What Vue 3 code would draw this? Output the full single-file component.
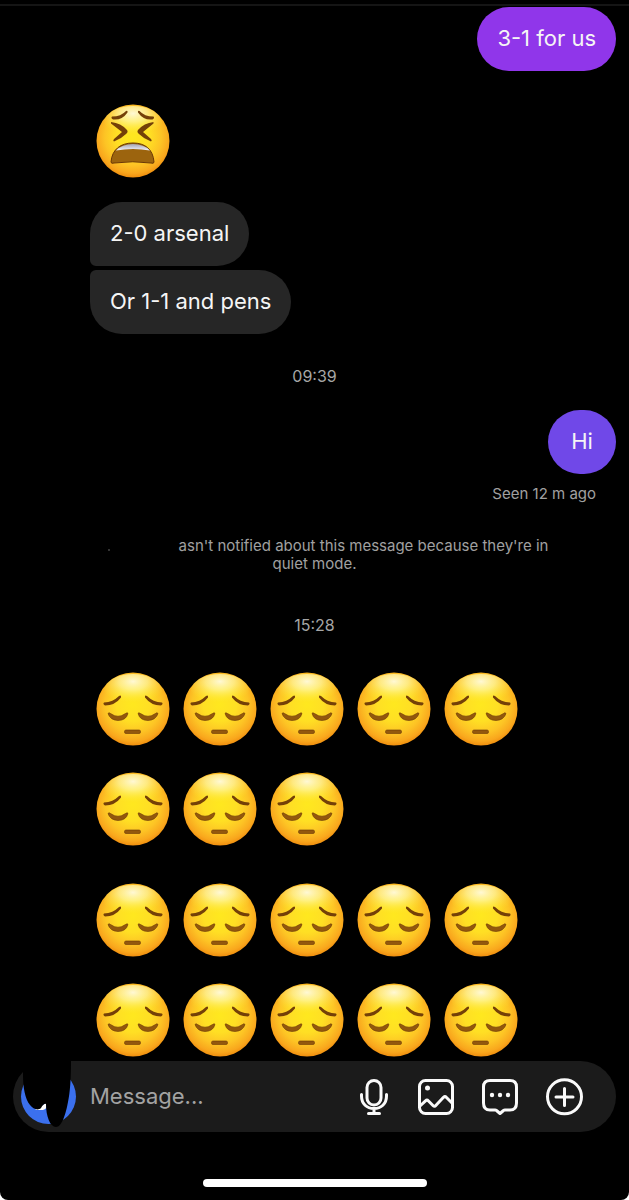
<script setup>
import { ref } from 'vue'

const draft = ref('')
const pensiveMessages = [
  [5, 3],
  [5, 5],
]
</script>

<template>
  <div class="screen">
    <svg class="defs" aria-hidden="true">
      <defs>
        <radialGradient id="face" cx="50%" cy="44%" r="57%">
          <stop offset="0" stop-color="#ffe81f" />
          <stop offset="0.4" stop-color="#ffdf24" />
          <stop offset="0.68" stop-color="#fdc425" />
          <stop offset="0.88" stop-color="#f9a71d" />
          <stop offset="1" stop-color="#ee8a0c" />
        </radialGradient>
        <radialGradient id="shine" cx="50%" cy="22%" r="62%">
          <stop offset="0" stop-color="#fffde8" stop-opacity="0.9" />
          <stop offset="0.4" stop-color="#fffab0" stop-opacity="0.65" />
          <stop offset="1" stop-color="#ffec30" stop-opacity="0" />
        </radialGradient>
        <linearGradient id="teeth" x1="0" y1="0" x2="0" y2="1">
          <stop offset="0" stop-color="#a3a3b3" />
          <stop offset="1" stop-color="#f4f4fa" />
        </linearGradient>
        <symbol id="pensive" viewBox="0 0 74 74">
          <circle cx="37" cy="37" r="36.5" fill="url(#face)" />
          <ellipse cx="37" cy="19" rx="29" ry="17" fill="url(#shine)" />
          <g fill="#744008">
            <path d="M8 30.500Q17 30 23 24Q25.500 22.500 25 25.500Q19 33.500 9 33.500Q6.500 32 8 30.500Z" />
            <path d="M66 30.500Q57 30 51 24Q48.500 22.500 49 25.500Q55 33.500 65 33.500Q67.500 32 66 30.500Z" />
          </g>
          <g fill="#93580d" stroke="#693706" stroke-width="0.600">
            <path d="M12 41.500Q13 40 14.500 41.500Q22 47 29.500 41.500Q31.500 40 32 41.500Q30 48.500 22 48.500Q14 48 12 41.500Z" />
            <path d="M62 41.500Q61 40 59.500 41.500Q52 47 44.500 41.500Q42.500 40 42 41.500Q44 48.500 52 48.500Q60 48 62 41.500Z" />
            <rect x="28.500" y="58" width="16" height="3.500" rx="1.500" />
          </g>
        </symbol>
        <symbol id="tired" viewBox="0 0 74 74">
          <circle cx="37" cy="37" r="36.5" fill="url(#face)" />
          <ellipse cx="37" cy="19" rx="29" ry="17" fill="url(#shine)" />
          <g fill="#744008">
            <path d="M16 12.500Q25 12.500 30 7Q32 6 31.500 8.500Q26 16.500 17 15.500Q14.500 14 16 12.500Z" />
            <path d="M57.500 12.500Q48.500 12.500 43.500 7Q41.500 6 42 8.500Q47.500 16.500 56.500 15.500Q59 14 57.500 12.500Z" />
            <path d="M15 18Q25 19 31 26Q32.500 28 30 30Q25 35 18 37.500Q16.500 36.500 18 35L26 28L15 19.500Z" />
            <path d="M57.500 18Q48 19 42 26Q40.500 28 43 30Q48 35 55 37.500Q56.500 36.500 55 35L47 28L57.500 19.500Z" />
          </g>
          <path d="M15 58C16 45 25 39 37 39C49 39 57 45 58 58Q58 60 55 59Q37 56.500 18 59Q15 60 15 58Z" fill="#9c640e" stroke="#693706" stroke-width="1" />
          <path d="M20 46.500Q26 40 37 40Q48 40 54 46.500Q37 43.500 20 46.500Z" fill="url(#teeth)" />
        </symbol>
      </defs>
    </svg>

    <main class="thread">
      <p class="bubble sent violet">3-1 for us</p>
      <div class="emoji-message">
        <div class="emoji-row">
          <svg class="emoji" role="img" aria-label="Tired face"><use href="#tired" /></svg>
        </div>
      </div>
      <p class="bubble received first">2-0 arsenal</p>
      <p class="bubble received last">Or 1-1 and pens</p>
      <time class="stamp">09:39</time>
      <p class="bubble sent indigo">Hi</p>
      <p class="seen">Seen 12 m ago</p>
      <p class="notice"><span class="hidden-name" aria-hidden="true"></span>asn't notified about this message because they're in quiet mode.</p>
      <time class="stamp">15:28</time>
      <div v-for="(rows, m) in pensiveMessages" :key="m" class="emoji-message pensive-message">
        <div v-for="(count, r) in rows" :key="r" class="emoji-row">
          <svg v-for="n in count" :key="n" class="emoji" role="img" aria-label="Pensive face"><use href="#pensive" /></svg>
        </div>
      </div>
    </main>

    <form class="composer" @submit.prevent>
      <button type="button" aria-label="Camera">
        <svg width="70" height="71" viewBox="0 0 70 71">
          <circle cx="35.500" cy="35.500" r="27.500" fill="#3b70ee" />
          <path d="M22 49L33 42V47Q32 49 28 49Z" fill="#fff" />
          <path d="M10 0V14C10 26 12 38 17 44C20 48 25 50 28 47Q31 42 33 43C33 55 37 66 43 66C49 66 53 52 55 41C57 31 58 18 58 0Z" fill="#000" />
        </svg>
      </button>
      <input v-model="draft" class="field" type="text" placeholder="Message..." aria-label="Message" />
      <div class="actions">
        <button type="button" aria-label="Voice message">
          <svg width="36" height="40" viewBox="0 0 36 40">
            <rect x="11" y="3.500" width="14" height="24.500" rx="7" />
            <path d="M5.500 17.500V19C5.500 27 11 31.500 18 31.500S30.500 27 30.500 19V17.500M18 32V36M12.500 36.500H23.500" />
          </svg>
        </button>
        <button type="button" aria-label="Photos">
          <svg width="40" height="40" viewBox="0 0 40 40">
            <rect x="3.500" y="3.500" width="33" height="33" rx="6" />
            <path d="M4 29L9.500 23.800Q11 22.500 12.500 24L17.200 28.700Q18.500 30 19.800 28.500L27.500 20.300Q29 19 30.500 20.500L36 26" />
            <circle class="dot" cx="11.500" cy="11" r="2.500" />
          </svg>
        </button>
        <button type="button" aria-label="Quick replies">
          <svg width="40" height="40" viewBox="0 0 40 40">
            <path d="M10 3.500H30Q36.500 3.500 36.500 10V26Q36.500 33 30 33H25Q24 33 23.500 33.500L20 36.500L16.500 33.500Q16 33 15 33H10Q3.500 33 3.500 26V10Q3.500 3.500 10 3.500Z" />
            <circle class="dot" cx="12" cy="18" r="2.200" />
            <circle class="dot" cx="20" cy="18" r="2.200" />
            <circle class="dot" cx="28" cy="18" r="2.200" />
          </svg>
        </button>
        <button type="button" aria-label="More">
          <svg width="40" height="40" viewBox="0 0 40 40">
            <circle cx="20.500" cy="19.800" r="17" />
            <path d="M20.500 11.500V28.500M12 20H29" />
          </svg>
        </button>
      </div>
    </form>
    <div class="home-indicator"></div>
  </div>
</template>

<style>
html,
body {
  background: #fff;
}
</style>

<style scoped>
.screen {
  box-sizing: border-box;
  min-height: 100vh;
  display: flex;
  flex-direction: column;
  padding: 7px 13px 13px;
  border-radius: 0 0 8px 8px;
  background: linear-gradient(#000 4px, #151515 4px, #151515 6px, #000 6px);
  color: #f5f5f5;
  font-family: Inter, "Liberation Sans", sans-serif;
}
.defs {
  position: absolute;
  width: 0;
  height: 0;
}
.thread {
  flex: 1;
  display: flex;
  flex-direction: column;
}
.bubble {
  margin: 0;
  padding: 15px 20px 17px;
  border-radius: 32px;
  font-size: 22px;
  line-height: 32px;
}
.sent {
  align-self: flex-end;
  box-sizing: border-box;
  min-width: 68px;
  text-align: center;
}
.violet {
  background: #9036ea;
}
.indigo {
  background: #7048e8;
}
.received {
  align-self: flex-start;
  margin-left: 77px;
  background: #262626;
}
.first {
  border-bottom-left-radius: 6px;
  margin-bottom: 4px;
}
.last {
  border-top-left-radius: 6px;
}
.emoji-message {
  display: flex;
  flex-direction: column;
  gap: 26px;
  margin: 33px 0 24px 83px;
}
.emoji-row {
  display: flex;
  gap: 13px;
}
.emoji {
  width: 74px;
  height: 74px;
  flex: none;
}
.pensive-message {
  margin: 0 0 37px 83px;
}
.pensive-message:last-child {
  margin-bottom: 4px;
}
.stamp {
  align-self: center;
  margin: 32px 0 24px;
  font-size: 16px;
  line-height: 20px;
  color: #a6a6a6;
}
.seen {
  align-self: flex-end;
  margin: 11px 20px 0 0;
  font-size: 15px;
  line-height: 18px;
  color: #a0a0a0;
}
.notice {
  margin: 34px 60px 20px;
  font-size: 15px;
  line-height: 18px;
  text-align: center;
  color: #a0a0a0;
}
.hidden-name {
  display: inline-block;
  width: 98px;
  height: 2px;
  background: radial-gradient(circle at 28px 1px, #333 1px, transparent 1px);
}
.notice + .stamp {
  margin: 22px 0 37px;
}
.composer {
  display: flex;
  align-items: center;
  height: 71px;
  padding-right: 32px;
  border-radius: 36px;
  background: #1b1b1b;
}
.composer button {
  display: block;
  flex: none;
  padding: 0;
  border: 0;
  background: none;
  cursor: pointer;
}
.composer svg {
  display: block;
}
.field {
  flex: 1;
  min-width: 0;
  padding: 0 7px 2px;
  border: 0;
  outline: 0;
  background: transparent;
  color: #f5f5f5;
  font: 22px/32px Inter, "Liberation Sans", sans-serif;
}
.field::placeholder {
  color: #a3a3a3;
  opacity: 1;
}
.actions {
  display: flex;
  gap: 24px;
}
.actions svg {
  fill: none;
  stroke: #fafafa;
  stroke-width: 3;
  stroke-linecap: round;
  stroke-linejoin: round;
}
.actions .dot {
  fill: #fafafa;
  stroke: none;
}
.home-indicator {
  align-self: center;
  width: 224px;
  height: 8px;
  margin-top: 47px;
  border-radius: 4px;
  background: #fff;
}
</style>
